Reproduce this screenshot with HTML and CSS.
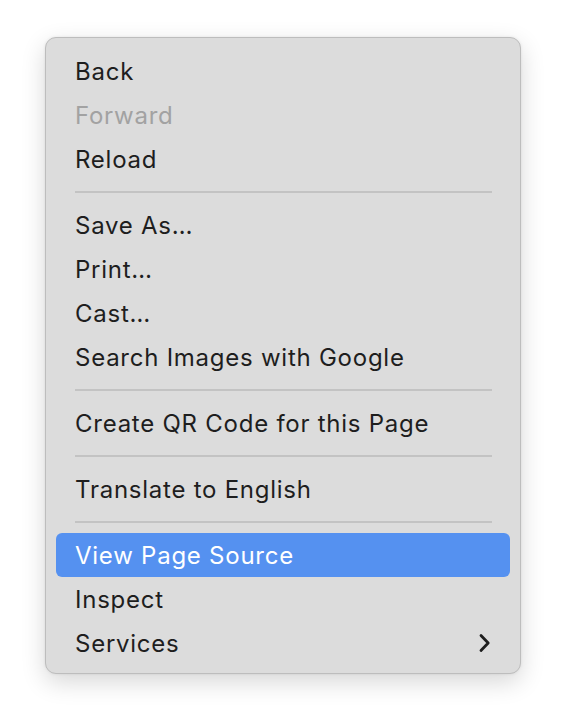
FILE: index.html
```html
<!DOCTYPE html>
<html>
<head>
<meta charset="utf-8">
<link rel="stylesheet" href="styles.css">
</head>
<body>
<div class="menu">
  <div class="item">Back</div>
  <div class="item disabled">Forward</div>
  <div class="item">Reload</div>
  <div class="sep"></div>
  <div class="item">Save As…</div>
  <div class="item">Print…</div>
  <div class="item">Cast…</div>
  <div class="item">Search Images with Google</div>
  <div class="sep"></div>
  <div class="item">Create QR Code for this Page</div>
  <div class="sep"></div>
  <div class="item">Translate to English</div>
  <div class="sep"></div>
  <div class="item active">View Page Source</div>
  <div class="item">Inspect</div>
  <div class="item sub">Services
    <svg class="chev" width="14" height="20" viewBox="0 0 14 20"><path d="M3 2.5 L10.2 10 L3 17.5" fill="none" stroke="#1e1e1e" stroke-width="2.8" stroke-linecap="round" stroke-linejoin="round"/></svg>
  </div>
</div>
</body>
</html>
```
FILE: styles.css
```css
html, body { margin: 0; padding: 0; background: #ffffff; }
body { width: 566px; height: 728px; padding-top: 37px; padding-left: 45px; box-sizing: border-box; }
.menu {
  width: 476px;
  box-sizing: border-box;
  background: #dcdcdc;
  border: 1px solid #bdbdbd;
  border-radius: 11px;
  padding: 11px 10px 8px 10px;
  box-shadow: 0 8px 24px rgba(0,0,0,0.16), 0 0 3px rgba(0,0,0,0.08);
  font-family: Inter, "Liberation Sans", sans-serif;
  font-size: 24px;
  color: #1e1e1e;
}
.item {
  height: 44px;
  display: flex;
  align-items: center;
  padding: 0 18px 0 19px;
  border-radius: 6px;
  letter-spacing: 0.75px;
}
.item.disabled { color: #a2a2a2; }
.item.active { background: #5591f0; color: #ffffff; }
.item.sub { justify-content: space-between; }
.chev { display: block; }
.sep { height: 22px; display: flex; align-items: center; padding: 0 18px 0 19px; }
.sep::before { content: ""; flex: 1; height: 2px; background: #c3c3c3; }
```
